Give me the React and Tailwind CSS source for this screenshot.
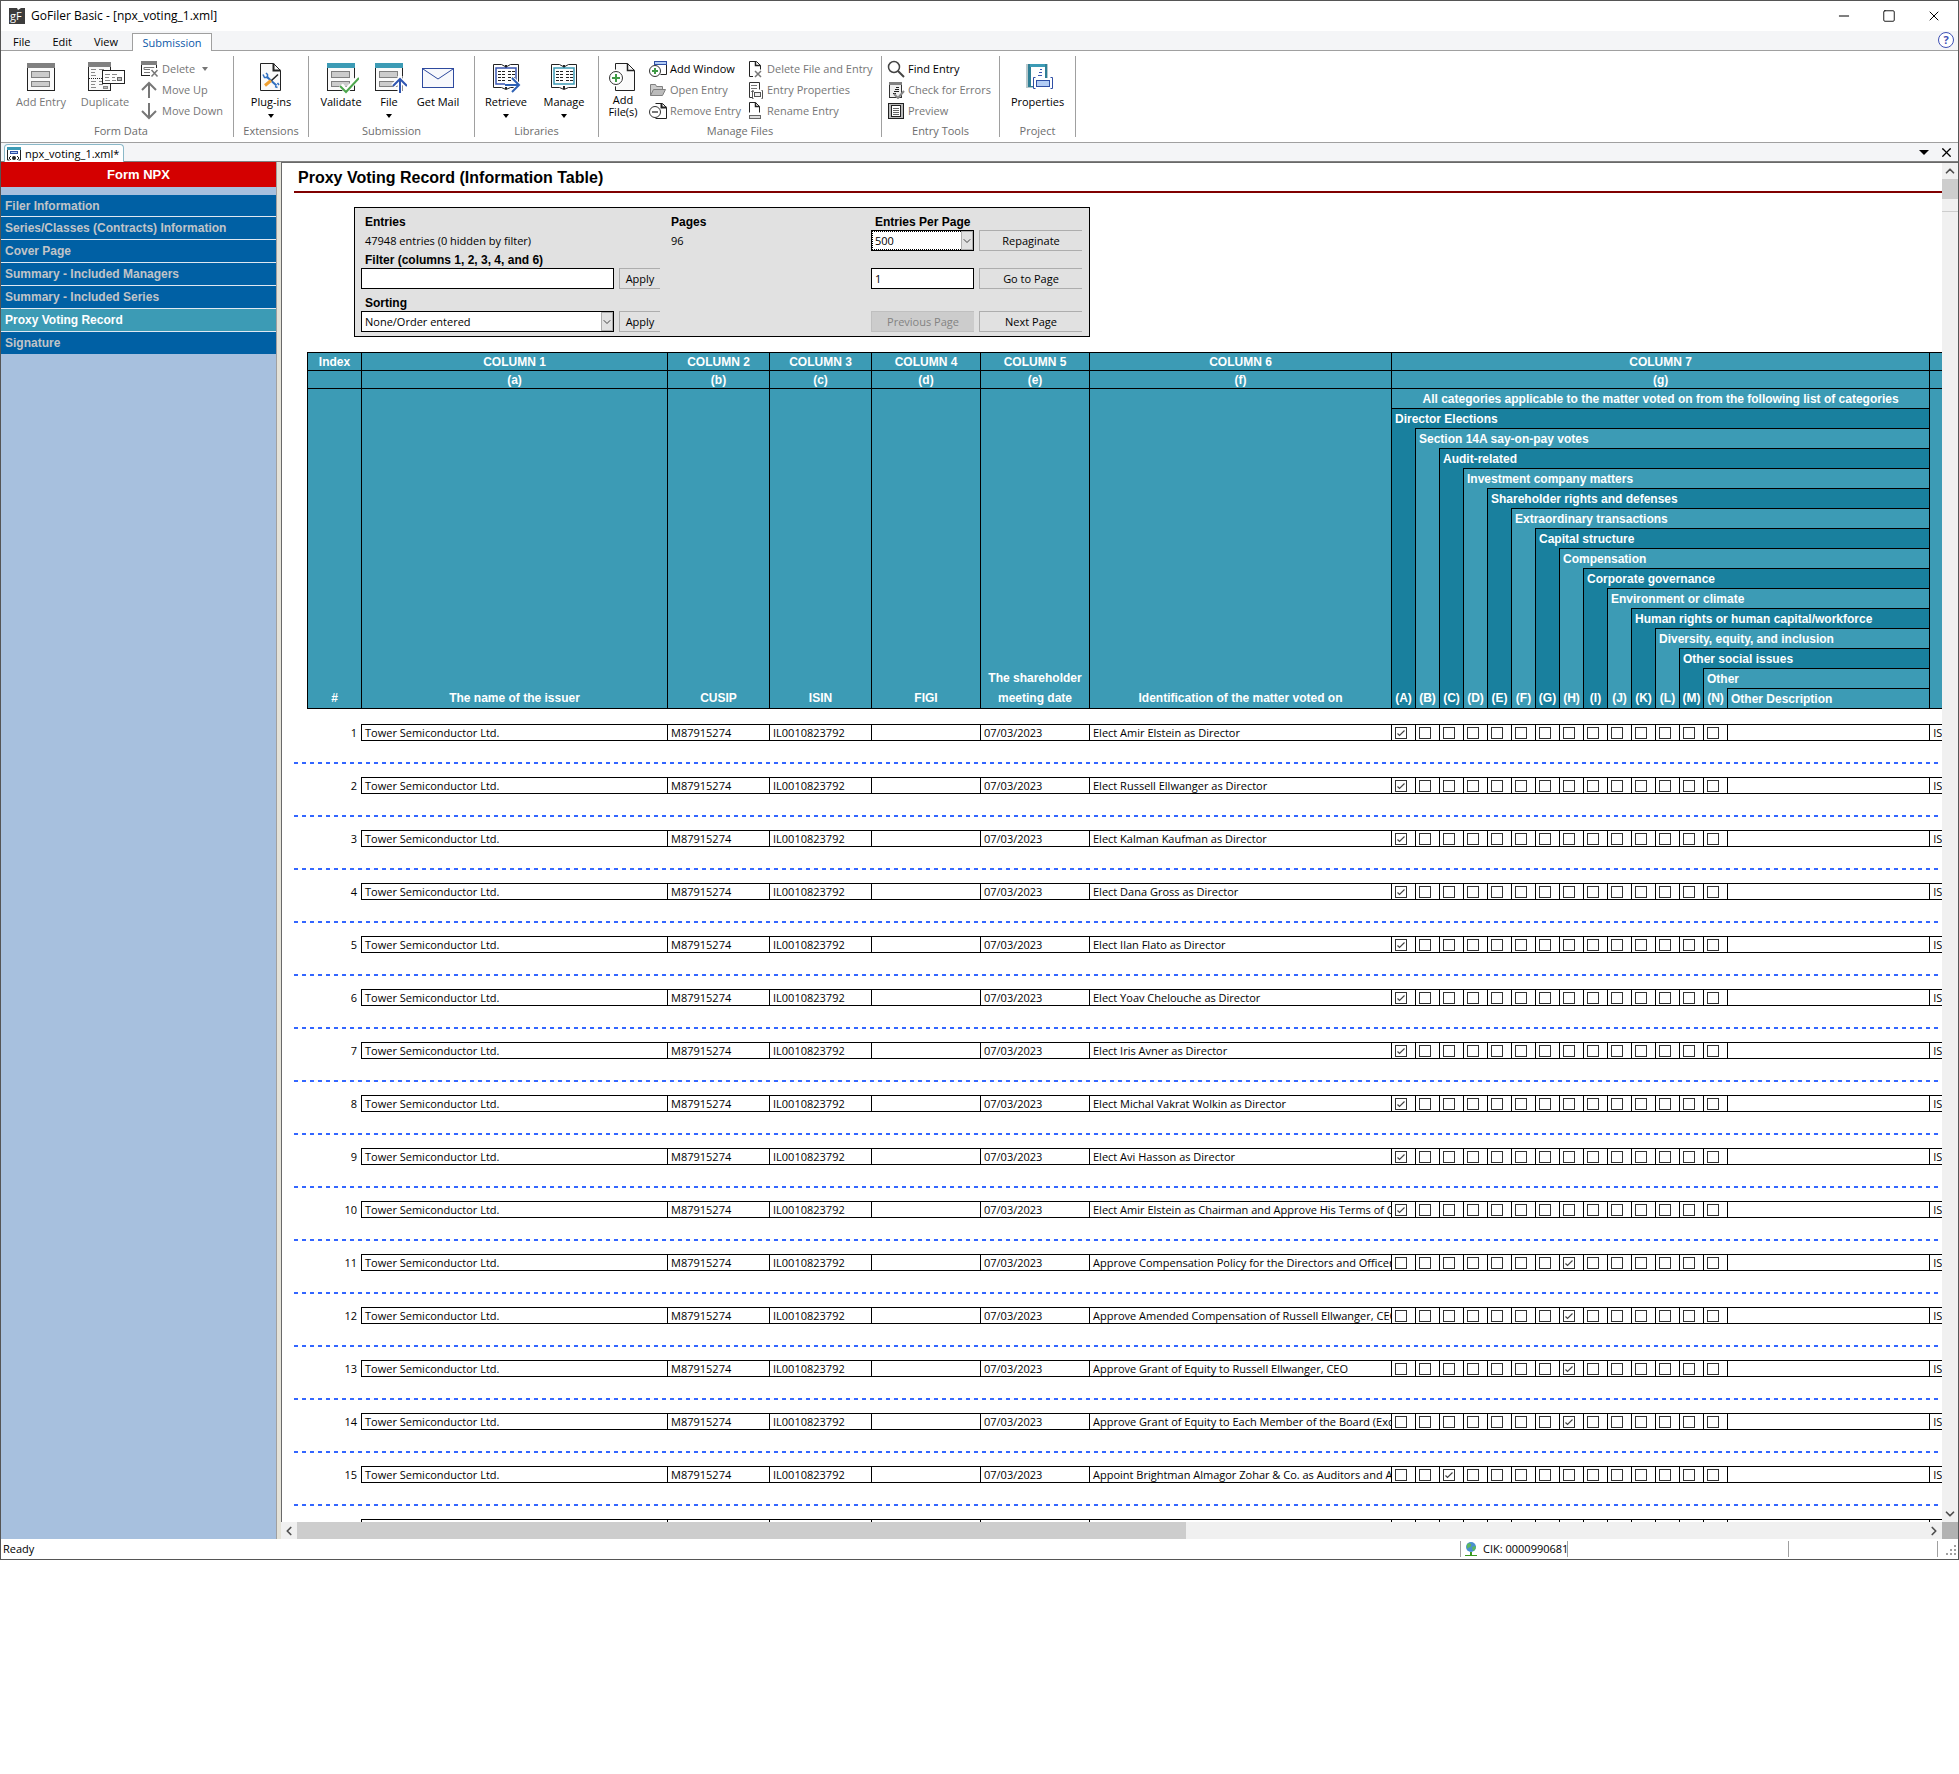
import React from "react";
import { Minus, Square, X, ChevronDown, ChevronUp, ChevronLeft, ChevronRight } from "lucide-react";

const TEAL = "#3c9bb5";
const GRAY = "#808080";

const navItems = [
  "Filer Information",
  "Series/Classes (Contracts) Information",
  "Cover Page",
  "Summary - Included Managers",
  "Summary - Included Series",
  "Proxy Voting Record",
  "Signature",
];

const categories = [
  "Director Elections",
  "Section 14A say-on-pay votes",
  "Audit-related",
  "Investment company matters",
  "Shareholder rights and defenses",
  "Extraordinary transactions",
  "Capital structure",
  "Compensation",
  "Corporate governance",
  "Environment or climate",
  "Human rights or human capital/workforce",
  "Diversity, equity, and inclusion",
  "Other social issues",
  "Other",
  "Other Description",
];

const letters = "ABCDEFGHIJKLMN".split("");

// matter = what was voted on, category = letter of the ticked box
const votes = [
  { matter: "Elect Amir Elstein as Director", category: "A" },
  { matter: "Elect Russell Ellwanger as Director", category: "A" },
  { matter: "Elect Kalman Kaufman as Director", category: "A" },
  { matter: "Elect Dana Gross as Director", category: "A" },
  { matter: "Elect Ilan Flato as Director", category: "A" },
  { matter: "Elect Yoav Chelouche as Director", category: "A" },
  { matter: "Elect Iris Avner as Director", category: "A" },
  { matter: "Elect Michal Vakrat Wolkin as Director", category: "A" },
  { matter: "Elect Avi Hasson as Director", category: "A" },
  { matter: "Elect Amir Elstein as Chairman and Approve His Terms of Compensation", category: "A" },
  { matter: "Approve Compensation Policy for the Directors and Officers", category: "H" },
  { matter: "Approve Amended Compensation of Russell Ellwanger, CEO", category: "H" },
  { matter: "Approve Grant of Equity to Russell Ellwanger, CEO", category: "H" },
  { matter: "Approve Grant of Equity to Each Member of the Board (Excluding", category: "H" },
  { matter: "Appoint Brightman Almagor Zohar & Co. as Auditors and Authorize", category: "C" },
  { matter: "", category: "" },
];

/* ---------- large ribbon icons ---------- */

const FormIcon = ({ color = GRAY, children }) => (
  <svg width="36" height="32" viewBox="0 0 36 32" fill="none">
    <rect x="4.5" y="2.5" width="27" height="26" fill="#fafafa" stroke="#222" />
    <rect x="4" y="1" width="28" height="5" fill={color} />
    <rect x="8.5" y="9.5" width="18" height="6" fill="#ccc" stroke="#808080" />
    <rect x="8.5" y="19.5" width="18" height="5" fill="#ccc" stroke="#808080" />
    {children}
  </svg>
);

const AddEntryIcon = () => <FormIcon />;

const ValidateIcon = () => (
  <FormIcon color={TEAL}>
    <path d="M18 23l5 6 13-14" stroke="#fff" strokeWidth="5" />
    <path d="M17 24l6 6 13-14" stroke="#4da64d" strokeWidth="2" />
  </FormIcon>
);

const FileUpIcon = () => (
  <FormIcon color={TEAL}>
    <path d="M29 14v18M22 24l7-7 7 7" stroke="#fff" strokeWidth="5" />
    <path d="M29 17v14M22 24l7-7 7 7" stroke="#2f55b0" strokeWidth="2" />
  </FormIcon>
);

const DuplicateIcon = () => (
  <svg width="40" height="32" viewBox="0 0 40 32" fill="none">
    <rect x="3.5" y="2.5" width="22" height="26" fill="#fafafa" stroke="#222" />
    <rect x="3" y="0" width="23" height="5" fill={GRAY} />
    <path d="M6 7.5h5M14 7.5h5M6 10.5h4M6 13.5h5M6 19.5h5M6 22.5h4M6 25.5h5M14 19.5h4M14 22.5h4" stroke="#888" />
    <path d="M4 16.5h14" stroke="#222" strokeDasharray="1 1" />
    <rect x="18.5" y="24.5" width="4" height="2" fill="#bbb" stroke="#888" />
    <rect x="17.5" y="8.5" width="22" height="13" fill="#fff" stroke="#222" />
    <path d="M20 12.5h5M27 12.5h5M20 15.5h4M27 15.5h3M20 18.5h5M27 18.5h4" stroke="#888" />
    <rect x="32.5" y="15.5" width="4" height="3" fill="#bbb" stroke="#666" />
  </svg>
);

const PluginIcon = () => (
  <svg width="32" height="32" viewBox="0 0 32 32" fill="none">
    <path d="M5.5 1.5h13l7 7v20h-20z" fill="#fafafa" stroke="#222" />
    <path d="M18.5 1.5v7h7" stroke="#222" strokeWidth="2" />
    <path d="M11.500 14.500l10 9" stroke="#2f6fc0" strokeWidth="2" />
    <path d="M8 12.500l1.500 3h3v-3l-1.500-1.500M20 24.500l2.500 1M22.500 21l1.500 2" stroke="#2f6fc0" strokeWidth="1.500" />
    <path d="M23 12.500l-6.500 6" stroke="#222" strokeWidth="1.500" />
    <path d="M16 18.500l-6 5" stroke="#f0a030" strokeWidth="3" />
  </svg>
);

const MailIcon = () => (
  <svg width="34" height="32" viewBox="0 0 34 32" fill="none">
    <rect x="1.5" y="6.5" width="31" height="19" fill="#f7f8fc" stroke="#2e4a9e" />
    <path d="M2 7l15 10L32 7" stroke="#2e4a9e" />
  </svg>
);

const BookIcon = ({ color, children }) => (
  <svg width="32" height="32" viewBox="0 0 32 32" fill="none">
    <path d="M3.500 2.500h8l4.500 2.500 4.500-2.500h8v23h-8l-4.500 2-4.500-2h-8z" fill="#fff" stroke="#222" />
    <path d="M16 3v3M16 24v3" stroke="#222" strokeWidth="2" />
    <rect x="6" y="6" width="20" height="16" fill="#fff" stroke={color} strokeWidth="1.500" />
    <path d="M8 9.500h7M18 9.500h7M8 12.500h7M18 12.500h7M8 15.500h7M18 15.500h7M8 18.500h7M18 18.500h7" stroke="#222" strokeDasharray="3 1" />
    {children}
  </svg>
);

const RetrieveIcon = () => (
  <BookIcon color="#3a56b0">
    <path d="M15 23h15M22 16l7 7-7 7" stroke="#fff" strokeWidth="4" />
    <path d="M15 23h14M22 16l7 7-7 7" stroke="#2f62b5" strokeWidth="2" />
  </BookIcon>
);

const ManageIcon = () => <BookIcon color={TEAL} />;

const AddFilesIcon = () => (
  <svg width="32" height="32" viewBox="0 0 32 32" fill="none">
    <path d="M8.500 1.500h12l7 7v20h-19z" fill="#fafafa" stroke="#222" />
    <path d="M20.500 1.500v7h7" stroke="#222" strokeWidth="1.500" />
    <circle cx="9" cy="16" r="8.500" fill="#fff" />
    <circle cx="9" cy="16" r="6.500" fill="#fff" stroke="#333" />
    <path d="M9 12v8M5 16h8" stroke="#3f9a45" strokeWidth="2" />
  </svg>
);

const PropertiesIcon = () => (
  <svg width="32" height="32" viewBox="0 0 32 32" fill="none">
    <rect x="4" y="2" width="22" height="24" fill="#b8c8cc" />
    <rect x="6" y="2" width="19" height="23" fill="#2f7f95" />
    <rect x="9" y="5" width="14" height="19" fill="#fff" />
    <rect x="8" y="2" width="15" height="3" fill={TEAL} />
    <path d="M18 7.500h2M17 10.500h3M16 13.500h4" stroke="#3a56b0" />
    <rect x="12" y="16" width="18" height="11" fill="#fff" />
    <rect x="14.500" y="18.500" width="13" height="6" fill="#b3cdf5" stroke="#2f4fa5" />
    <path d="M13.500 15.500h-2v11h2M28.500 15.500h2v11h-2" stroke="#2f4fa5" />
  </svg>
);

/* ---------- small ribbon icons ---------- */

const Small = ({ children }) => (
  <svg width="18" height="18" viewBox="0 0 18 18" fill="none" className="shrink-0">{children}</svg>
);

const DeleteIcon = () => (
  <Small>
    <rect x="0.500" y="2.500" width="15" height="13" fill="#fff" stroke="#222" />
    <rect x="0" y="1" width="16" height="4" fill={GRAY} />
    <path d="M3 7.500h10v2H3zM3 12.500h7" stroke="#777" />
    <path d="M9 8h9v9H9z" fill="#fff" />
    <path d="M10.500 10l6 6.500M16.500 10l-6 6.500" stroke="#777" strokeWidth="1.500" />
  </Small>
);
const MoveUpIcon = () => (
  <Small><path d="M8 17V2M1 9l7-7 7 7" stroke="#777" strokeWidth="2" /></Small>
);
const MoveDownIcon = () => (
  <Small><path d="M8 1v15M1 9l7 7 7-7" stroke="#777" strokeWidth="2" /></Small>
);
const AddWindowIcon = () => (
  <Small>
    <path d="M5.500 2.500h12v12h-6" stroke="#222" />
    <rect x="5.500" y="1.500" width="12" height="3" fill="#b3cdf5" stroke="#2f4fa5" />
    <circle cx="6" cy="11" r="5.500" fill="#fff" stroke="#333" />
    <path d="M6 8v6M3 11h6" stroke="#3f9a45" strokeWidth="2" />
  </Small>
);
const OpenEntryIcon = () => (
  <Small>
    <path d="M1.500 14.500v-11h5l1 2h6v3" fill="#ccc" stroke="#808080" />
    <path d="M1.500 14.500l3-6h12l-3 6z" fill="#bbb" stroke="#808080" />
  </Small>
);
const RemoveEntryIcon = () => (
  <Small>
    <path d="M6.500 1.500h7l4 4v11h-11" fill="#fff" stroke="#222" />
    <path d="M12.500 1.500v4h5" stroke="#222" strokeWidth="2" />
    <circle cx="6" cy="10" r="5.500" fill="#fff" stroke="#333" />
    <path d="M3 10h6" stroke="#777" strokeWidth="2" />
  </Small>
);
const DeleteFileIcon = () => (
  <Small>
    <path d="M7 16.500H3.500v-15h7l4 4v4" stroke="#222" />
    <path d="M9.500 1.500v4h5" stroke="#222" strokeWidth="1.500" />
    <path d="M9 11l6 6M15 11l-6 6" stroke="#777" strokeWidth="1.500" />
  </Small>
);
const EntryPropertiesIcon = () => (
  <Small>
    <path d="M6 16.500H3.500v-15h10v7" stroke="#333" />
    <path d="M5 4.500h6M5 7.500h6M5 10.500h3" stroke="#777" />
    <rect x="8.500" y="11.500" width="6" height="4" fill="#eee" stroke="#555" />
    <path d="M7.500 9.500H6.500v8h1M15.500 9.500h1v8h-1" stroke="#555" />
  </Small>
);
const RenameIcon = () => (
  <Small>
    <path d="M3.500 10.500v-10h6l4 4v6" stroke="#222" />
    <path d="M9.500 0.500v4h4" stroke="#222" strokeWidth="1.500" />
    <rect x="3.500" y="13.500" width="11" height="3" fill="#ddd" stroke="#666" />
  </Small>
);
const FindIcon = () => (
  <Small>
    <circle cx="7" cy="7" r="5.500" stroke="#444" strokeWidth="1.500" />
    <path d="M11 11l6 6" stroke="#444" strokeWidth="2" />
  </Small>
);
const CheckErrorsIcon = () => (
  <Small>
    <rect x="2.500" y="1.500" width="12" height="15" fill="#eee" stroke="#333" />
    <rect x="2" y="1" width="13" height="3" fill={GRAY} />
    <path d="M9 6.500h3M8 8.500h4M7 10.500h5M6 12.500h3" stroke="#222" />
    <path d="M7 13l4 4 6-7" stroke="#888" strokeWidth="2" />
  </Small>
);
const PreviewIcon = () => (
  <Small>
    <rect x="1.500" y="1.500" width="15" height="15" fill="#bbb" stroke="#222" />
    <rect x="4.500" y="3.500" width="9" height="11" fill="#fff" stroke="#222" />
    <path d="M6 6.500h6M6 8.500h6M6 10.500h6M6 12.500h6" stroke="#666" />
  </Small>
);

const Caret = ({ className = "" }) => (
  <svg width="6" height="4" viewBox="0 0 6 4" className={className}>
    <path d="M0 0h6L3 4z" fill="currentColor" />
  </svg>
);

/* ---------- ribbon pieces ---------- */

const Group = ({ label, className, children }) => (
  <div className={`flex h-[81px] shrink-0 flex-col justify-between border-r border-[#a0a0a0] ${className}`}>
    <div className="flex items-start">{children}</div>
    <div className="text-center leading-3 text-[#6d6d6d]">{label}</div>
  </div>
);

const BigButton = ({ icon, label, menu, disabled, className = "w-12" }) => (
  <button
    type="button"
    disabled={disabled}
    className={`flex shrink-0 flex-col items-center pt-1.5 whitespace-nowrap disabled:text-[#767676] ${className}`}
  >
    {icon}
    <span className="leading-4">{label}</span>
    {menu && <Caret className="mt-1" />}
  </button>
);

const SmallButton = ({ icon, label, menu, disabled = true }) => (
  <button
    type="button"
    disabled={disabled}
    className="flex h-[21px] items-center gap-[3px] whitespace-nowrap disabled:text-[#767676]"
  >
    {icon}
    <span className="leading-4">{label}</span>
    {menu && <Caret className="ml-1" />}
  </button>
);

const Ribbon = () => (
  <div className="flex h-[92px] items-center border-b border-[#a0a0a0]">
    <Group label="Form Data" className="w-[233px] pl-2">
      <BigButton icon={<AddEntryIcon />} label="Add Entry" disabled className="w-16" />
      <BigButton icon={<DuplicateIcon />} label="Duplicate" disabled className="w-16" />
      <div className="ml-1 pt-0.5">
        <SmallButton icon={<DeleteIcon />} label="Delete" menu />
        <SmallButton icon={<MoveUpIcon />} label="Move Up" />
        <SmallButton icon={<MoveDownIcon />} label="Move Down" />
      </div>
    </Group>
    <Group label="Extensions" className="w-[75px]">
      <BigButton icon={<PluginIcon />} label="Plug-ins" menu className="w-full" />
    </Group>
    <Group label="Submission" className="w-[166px] px-2">
      <BigButton icon={<ValidateIcon />} label="Validate" />
      <BigButton icon={<FileUpIcon />} label="File" menu />
      <BigButton icon={<MailIcon />} label="Get Mail" className="w-[50px]" />
    </Group>
    <Group label="Libraries" className="w-[124px] px-0.5">
      <BigButton icon={<RetrieveIcon />} label="Retrieve" menu className="w-[58px]" />
      <BigButton icon={<ManageIcon />} label="Manage" menu className="w-[58px]" />
    </Group>
    <Group label="Manage Files" className="w-[283px]">
      <button type="button" className="flex w-12 shrink-0 flex-col items-center pt-1.5">
        <AddFilesIcon />
        <span className="leading-3">Add<br />File(s)</span>
      </button>
      <div className="ml-0.5 w-[97px] shrink-0 pt-0.5">
        <SmallButton icon={<AddWindowIcon />} label="Add Window" disabled={false} />
        <SmallButton icon={<OpenEntryIcon />} label="Open Entry" />
        <SmallButton icon={<RemoveEntryIcon />} label="Remove Entry" />
      </div>
      <div className="pt-0.5">
        <SmallButton icon={<DeleteFileIcon />} label="Delete File and Entry" />
        <SmallButton icon={<EntryPropertiesIcon />} label="Entry Properties" />
        <SmallButton icon={<RenameIcon />} label="Rename Entry" />
      </div>
    </Group>
    <Group label="Entry Tools" className="w-[118px]">
      <div className="pt-0.5 pl-[5px]">
        <SmallButton icon={<FindIcon />} label="Find Entry" disabled={false} />
        <SmallButton icon={<CheckErrorsIcon />} label="Check for Errors" />
        <SmallButton icon={<PreviewIcon />} label="Preview" />
      </div>
    </Group>
    <Group label="Project" className="w-[76px]">
      <BigButton icon={<PropertiesIcon />} label="Properties" className="w-full" />
    </Group>
  </div>
);

const TitleBar = () => (
  <div className="flex h-[30px] items-center pl-2">
    <svg width="16" height="16" viewBox="0 0 16 16">
      <path d="M0 0h8l1 2 3-2h4v16H0z" fill="#3c3c3c" />
      <text x="1" y="12" fill="#fff" fontSize="11" fontFamily="Open Sans">gF</text>
    </svg>
    <h1 className="ml-1.5 text-[12px]">GoFiler Basic - [npx_voting_1.xml]</h1>
    <div className="ml-auto flex items-center gap-[30px] pr-4">
      <button type="button" aria-label="Minimize"><Minus size={16} strokeWidth={1.5} /></button>
      <button type="button" aria-label="Maximize"><Square size={14} strokeWidth={1.5} /></button>
      <button type="button" aria-label="Close"><X size={16} strokeWidth={1.5} /></button>
    </div>
  </div>
);

const MenuBar = () => (
  <div className="flex h-5 items-end border-b border-[#a0a0a0] bg-[#f4f5f7] pl-3">
    <div className="flex w-[119px] items-center gap-[22px] leading-4">
      <button type="button">File</button>
      <button type="button">Edit</button>
      <button type="button">View</button>
    </div>
    <button
      type="button"
      className="-mb-px h-[18px] w-20 border border-b-0 border-[#a0a0a0] bg-white leading-4 text-[#0b58a8]"
    >
      Submission
    </button>
    <button
      type="button"
      aria-label="Help"
      className="mr-1 mb-0.5 ml-auto flex size-4 items-center justify-center rounded-full border border-[#3f51b5] bg-white leading-3 font-bold text-[#3f51b5]"
    >
      ?
    </button>
  </div>
);

const TabStrip = () => (
  <div className="flex h-[19px] items-end border-b border-[#808080] bg-[#f4f5f7] pl-[3px]">
    <div className="-mb-px flex h-[18px] items-center gap-1 rounded-t-sm border border-b-0 border-[#8ab8c8] bg-white pr-1 pl-0.5">
      <svg width="14" height="14" viewBox="0 0 14 14" fill="none">
        <path d="M0.500 3v10h2M13.500 3v10h-2" stroke="#222" />
        <rect width="14" height="3" fill={TEAL} />
        <rect x="3.500" y="4.500" width="7" height="2" fill="#b3cdf5" stroke="#2f4fa5" />
        <path d="M4 9l-2 2 2 2M10 9l2 2-2 2" stroke="#222" />
        <circle cx="7" cy="11" r="2" fill="#222" />
      </svg>
      <span className="leading-4">npx_voting_1.xml*</span>
    </div>
    <div className="ml-auto flex h-full items-center gap-2.5 pr-1">
      <button type="button" aria-label="Open documents">
        <svg width="10" height="5" viewBox="0 0 10 5"><path d="M0 0h10L5 5z" /></svg>
      </button>
      <button type="button" aria-label="Close document"><X size={15} strokeWidth={2} /></button>
    </div>
  </div>
);

const Sidebar = () => (
  <aside className="w-[275px] shrink-0 bg-[#a7c0de] font-['Liberation_Sans'] text-[12px] font-bold">
    <h2 className="mb-2 h-[25px] bg-[#d40000] text-center text-[13px] leading-[25px] text-white">Form NPX</h2>
    <nav>
      {navItems.map((item) => (
        <a
          key={item}
          href="#"
          className={`block h-[23px] border-b border-[#dfe8f2] pl-1 leading-[22px] first:h-[22px] last:h-[22px] last:border-0 ${
            item === "Proxy Voting Record" ? "bg-[#3c9bb5] text-white" : "bg-[#0060a4] text-[#c0c4c8]"
          }`}
        >
          {item}
        </a>
      ))}
    </nav>
  </aside>
);

/* ---------- paging / filter panel ---------- */

const PanelButton = ({ children, disabled }) => (
  <button
    type="button"
    disabled={disabled}
    className="h-[21px] border border-r-0 border-[#adadad] bg-[#e1e1e1] leading-[19px] disabled:border-[#bfbfbf] disabled:bg-[#cccccc] disabled:text-[#838383]"
  >
    {children}
  </button>
);

const PanelSelect = ({ id, options, focused }) => (
  <div className="relative">
    <select
      id={id}
      className={`h-[21px] w-full appearance-none border border-black bg-white pl-[3px] leading-[19px] ${
        focused ? "outline-1 -outline-offset-2 outline-dotted outline-black" : ""
      }`}
    >
      {options.map((option) => (
        <option key={option}>{option}</option>
      ))}
    </select>
    <span className="pointer-events-none absolute top-px right-px flex h-[19px] w-3 items-center justify-center border border-[#adadad] bg-[#e1e1e1]">
      <ChevronDown size={12} strokeWidth={2} className="shrink-0 text-[#444]" />
    </span>
  </div>
);

const PanelLabel = ({ className, htmlFor, children }) => (
  <label htmlFor={htmlFor} className={`font-['Liberation_Sans'] text-[12px] font-bold ${className}`}>
    {children}
  </label>
);

const FilterPanel = () => (
  <div className="ml-[60px] grid w-[736px] grid-cols-[253px_41px_201px_103px_103px] grid-rows-[22px_21px_17px_21px_22px_21px] gap-x-[5px] border border-black bg-[#e1e1e1] pb-1 pl-1.5 leading-4">
    <b className="col-span-2 self-end pl-1 font-['Liberation_Sans'] text-[12px]">Entries</b>
    <b className="self-end pl-1.5 font-['Liberation_Sans'] text-[12px]">Pages</b>
    <PanelLabel htmlFor="perPage" className="col-span-2 self-end pl-1">Entries Per Page</PanelLabel>

    <span className="col-span-2 self-center pl-1">47948 entries (0 hidden by filter)</span>
    <span className="self-center pl-1.5">96</span>
    <PanelSelect id="perPage" options={["500"]} focused />
    <PanelButton>Repaginate</PanelButton>

    <PanelLabel htmlFor="filter" className="col-span-5 self-center pl-1">Filter (columns 1, 2, 3, 4, and 6)</PanelLabel>

    <input id="filter" type="text" className="h-[21px] border border-black bg-white pl-[3px]" />
    <PanelButton>Apply</PanelButton>
    <span />
    <input type="text" aria-label="Page number" defaultValue="1" className="h-[21px] border border-black bg-white pl-[3px]" />
    <PanelButton>Go to Page</PanelButton>

    <PanelLabel htmlFor="sorting" className="col-span-5 self-end pl-1">Sorting</PanelLabel>

    <PanelSelect id="sorting" options={["None/Order entered"]} />
    <PanelButton>Apply</PanelButton>
    <span />
    <PanelButton disabled>Previous Page</PanelButton>
    <PanelButton>Next Page</PanelButton>
  </div>
);

/* ---------- voting table ---------- */

const Head = ({ className = "", children, ...rest }) => (
  <th className={`border-t border-l border-black bg-[#3c9bb5] p-0 ${className}`} {...rest}>
    {children}
  </th>
);

const shade = (i) => (i % 2 === 0 && i < 14 ? "bg-[#19809e]" : "bg-[#3c9bb5]");

const TableHead = () => (
  <thead className="font-['Liberation_Sans'] text-[12px] leading-4 text-white">
    <tr className="h-[18px]">
      <td />
      <Head>Index</Head>
      {[1, 2, 3, 4, 5, 6].map((n) => (
        <Head key={n}>COLUMN {n}</Head>
      ))}
      <Head colSpan={15}>COLUMN 7</Head>
      <Head />
    </tr>
    <tr className="h-[18px]">
      <td />
      <Head />
      {["a", "b", "c", "d", "e", "f"].map((l) => (
        <Head key={l}>({l})</Head>
      ))}
      <Head colSpan={15}>(g)</Head>
      <Head />
    </tr>
    <tr className="h-5">
      <td rowSpan={16} />
      {[
        "#",
        "The name of the issuer",
        "CUSIP",
        "ISIN",
        "FIGI",
        "The shareholder meeting date",
        "Identification of the matter voted on",
      ].map((label) => (
        <Head key={label} rowSpan={16} className="border-b align-bottom leading-5">{label}</Head>
      ))}
      <Head colSpan={15}>All categories applicable to the matter voted on from the following list of categories</Head>
      <Head rowSpan={16} className="border-b" />
    </tr>
    {categories.map((label, i) => (
      <tr key={label} className={i === 14 ? "h-[21px]" : "h-5"}>
        {/* lettered column that drops down from the label one row above */}
        {i > 0 && (
          <th rowSpan={16 - i - 1} className={`border-b border-l border-black p-0 align-bottom leading-5 ${shade(i - 1)}`}>
            ({letters[i - 1]})
          </th>
        )}
        <th
          colSpan={15 - i}
          className={`border-t border-l border-black p-0 pl-[3px] text-left ${shade(i)} ${i === 14 ? "border-b" : ""}`}
        >
          {label}
        </th>
      </tr>
    ))}
  </thead>
);

const Cell = ({ className = "pl-[3px]", children }) => (
  <td className={`overflow-hidden border-y border-l border-black p-0 whitespace-nowrap ${className}`}>{children}</td>
);

const Tick = ({ checked, label }) => (
  <span className="relative block size-3">
    <input type="checkbox" aria-label={label} defaultChecked={checked} className="peer block size-3 appearance-none border border-[#333] bg-white" />
    <svg viewBox="0 0 12 12" fill="none" className="pointer-events-none absolute inset-0 hidden size-3 peer-checked:block">
      <path d="M2.500 6.500l2 2 5-5" stroke="#444" strokeWidth="1.200" />
    </svg>
  </span>
);

const VotingTable = () => (
  <table className="w-full table-fixed border-separate border-spacing-0">
    <colgroup>
      <col className="w-[13px]" />
      <col className="w-[54px]" />
      <col className="w-[306px]" />
      <col className="w-[102px]" />
      <col className="w-[102px]" />
      <col className="w-[109px]" />
      <col className="w-[109px]" />
      <col className="w-[302px]" />
      {letters.map((l) => (
        <col key={l} className="w-6" />
      ))}
      <col className="w-[202px]" />
      <col />
    </colgroup>
    <TableHead />
    <tbody className="leading-[15px]">
      <tr className="h-[15px]"><td colSpan={24} className="p-0" /></tr>
      {votes.map((vote, i) => (
        <React.Fragment key={i}>
          <tr className="h-[17px]">
            <td className="p-0" />
            <td className="p-0 pr-1 text-right">{i + 1}</td>
            <Cell>Tower Semiconductor Ltd.</Cell>
            <Cell>M87915274</Cell>
            <Cell>IL0010823792</Cell>
            <Cell />
            <Cell>07/03/2023</Cell>
            <Cell>{vote.matter}</Cell>
            {letters.map((l) => (
              <Cell key={l}>
                <Tick checked={vote.category === l} label={`Category ${l}, entry ${i + 1}`} />
              </Cell>
            ))}
            <Cell />
            <Cell>ISSUER</Cell>
          </tr>
          <tr>
            <td colSpan={24} className="p-0 pt-[21px] pb-[13px]">
              <div className="h-0.5 bg-[repeating-linear-gradient(90deg,#3366ff_0_4px,transparent_4px_8px)]" />
            </td>
          </tr>
        </React.Fragment>
      ))}
    </tbody>
  </table>
);

const VerticalScroll = () => (
  <div className="flex w-4 shrink-0 flex-col items-center bg-[#f0f0f0] text-[#505050]">
    <ChevronUp size={14} strokeWidth={3} className="my-px" />
    <div className="h-5 w-full bg-[#cdcdcd]" />
    <div className="mt-3 h-px w-full bg-[#cdcdcd]" />
    <ChevronDown size={14} strokeWidth={3} className="mt-auto mb-px" />
  </div>
);

const HorizontalScroll = () => (
  <div className="flex h-[17px] shrink-0 items-center bg-[#f0f0f0] text-[#505050]">
    <ChevronLeft size={14} strokeWidth={3} className="mx-px shrink-0" />
    <div className="h-full w-[53%] bg-[#cdcdcd]" />
    <ChevronRight size={14} strokeWidth={3} className="mr-px ml-auto" />
    <div className="h-full w-4 bg-[#b2b2b2]" />
  </div>
);

const StatusBar = () => (
  <footer className="flex h-5 shrink-0 items-center bg-white pl-0.5 leading-4">
    <span className="flex-1">Ready</span>
    <span className="flex w-[107px] items-center gap-1.5 border-l border-[#a0a0a0] pl-1 whitespace-nowrap">
      <svg width="12" height="15" viewBox="0 0 12 15" className="shrink-0">
        <circle cx="6" cy="5" r="5" fill="#4a8fd0" />
        <path d="M2 2c3-2 5 0 4 2s-3 1-4 3zM7 5l4-1c0 3-2 5-3 5z" fill="#5cb85c" />
        <path d="M5 10h2v3h5v1H0v-1h5z" fill="#3a9a1e" />
      </svg>
      CIK: 0000990681
    </span>
    <span className="h-4 w-[221px] border-l border-[#a0a0a0]" />
    <span className="h-4 w-[149px] border-l border-[#a0a0a0]" />
    <span className="flex h-4 w-[21px] items-end justify-end border-l border-[#a0a0a0]">
      <svg width="12" height="12" viewBox="0 0 12 12" fill="#a0a0a0">
        <path d="M8 0h2v2H8zM4 4h2v2H4zM8 4h2v2H8zM0 8h2v2H0zM4 8h2v2H4zM8 8h2v2H8z" />
      </svg>
    </span>
  </footer>
);

const App = () => {
  return (
    <div className="min-h-screen bg-white">
      <div className="flex h-[calc(100vh-214px)] w-full flex-col overflow-hidden border border-[#555] bg-white font-['Open_Sans'] text-[11px] leading-4 text-black">
        <header className="shrink-0">
          <TitleBar />
          <MenuBar />
          <Ribbon />
          <TabStrip />
        </header>

        <div className="flex min-h-0 flex-1">
          <Sidebar />
          <div className="w-[5px] shrink-0 border-l border-[#a0a0a0] bg-[#e4e2d8]" />
          <main className="flex min-w-0 flex-1 flex-col">
            <div className="flex min-h-0 flex-1 border-t border-l border-[#696969]">
              <div className="min-w-0 flex-1 overflow-hidden pl-3">
                <h2 className="border-b-2 border-[#800000] pt-[5px] pb-[3px] pl-1 font-['Liberation_Sans'] text-[16px] leading-5 font-bold">
                  Proxy Voting Record (Information Table)
                </h2>
                <div className="h-3.5" />
                <FilterPanel />
                <div className="h-[15px]" />
                <VotingTable />
              </div>
              <VerticalScroll />
            </div>
            <HorizontalScroll />
          </main>
        </div>

        <StatusBar />
      </div>
    </div>
  );
};

export default App;
